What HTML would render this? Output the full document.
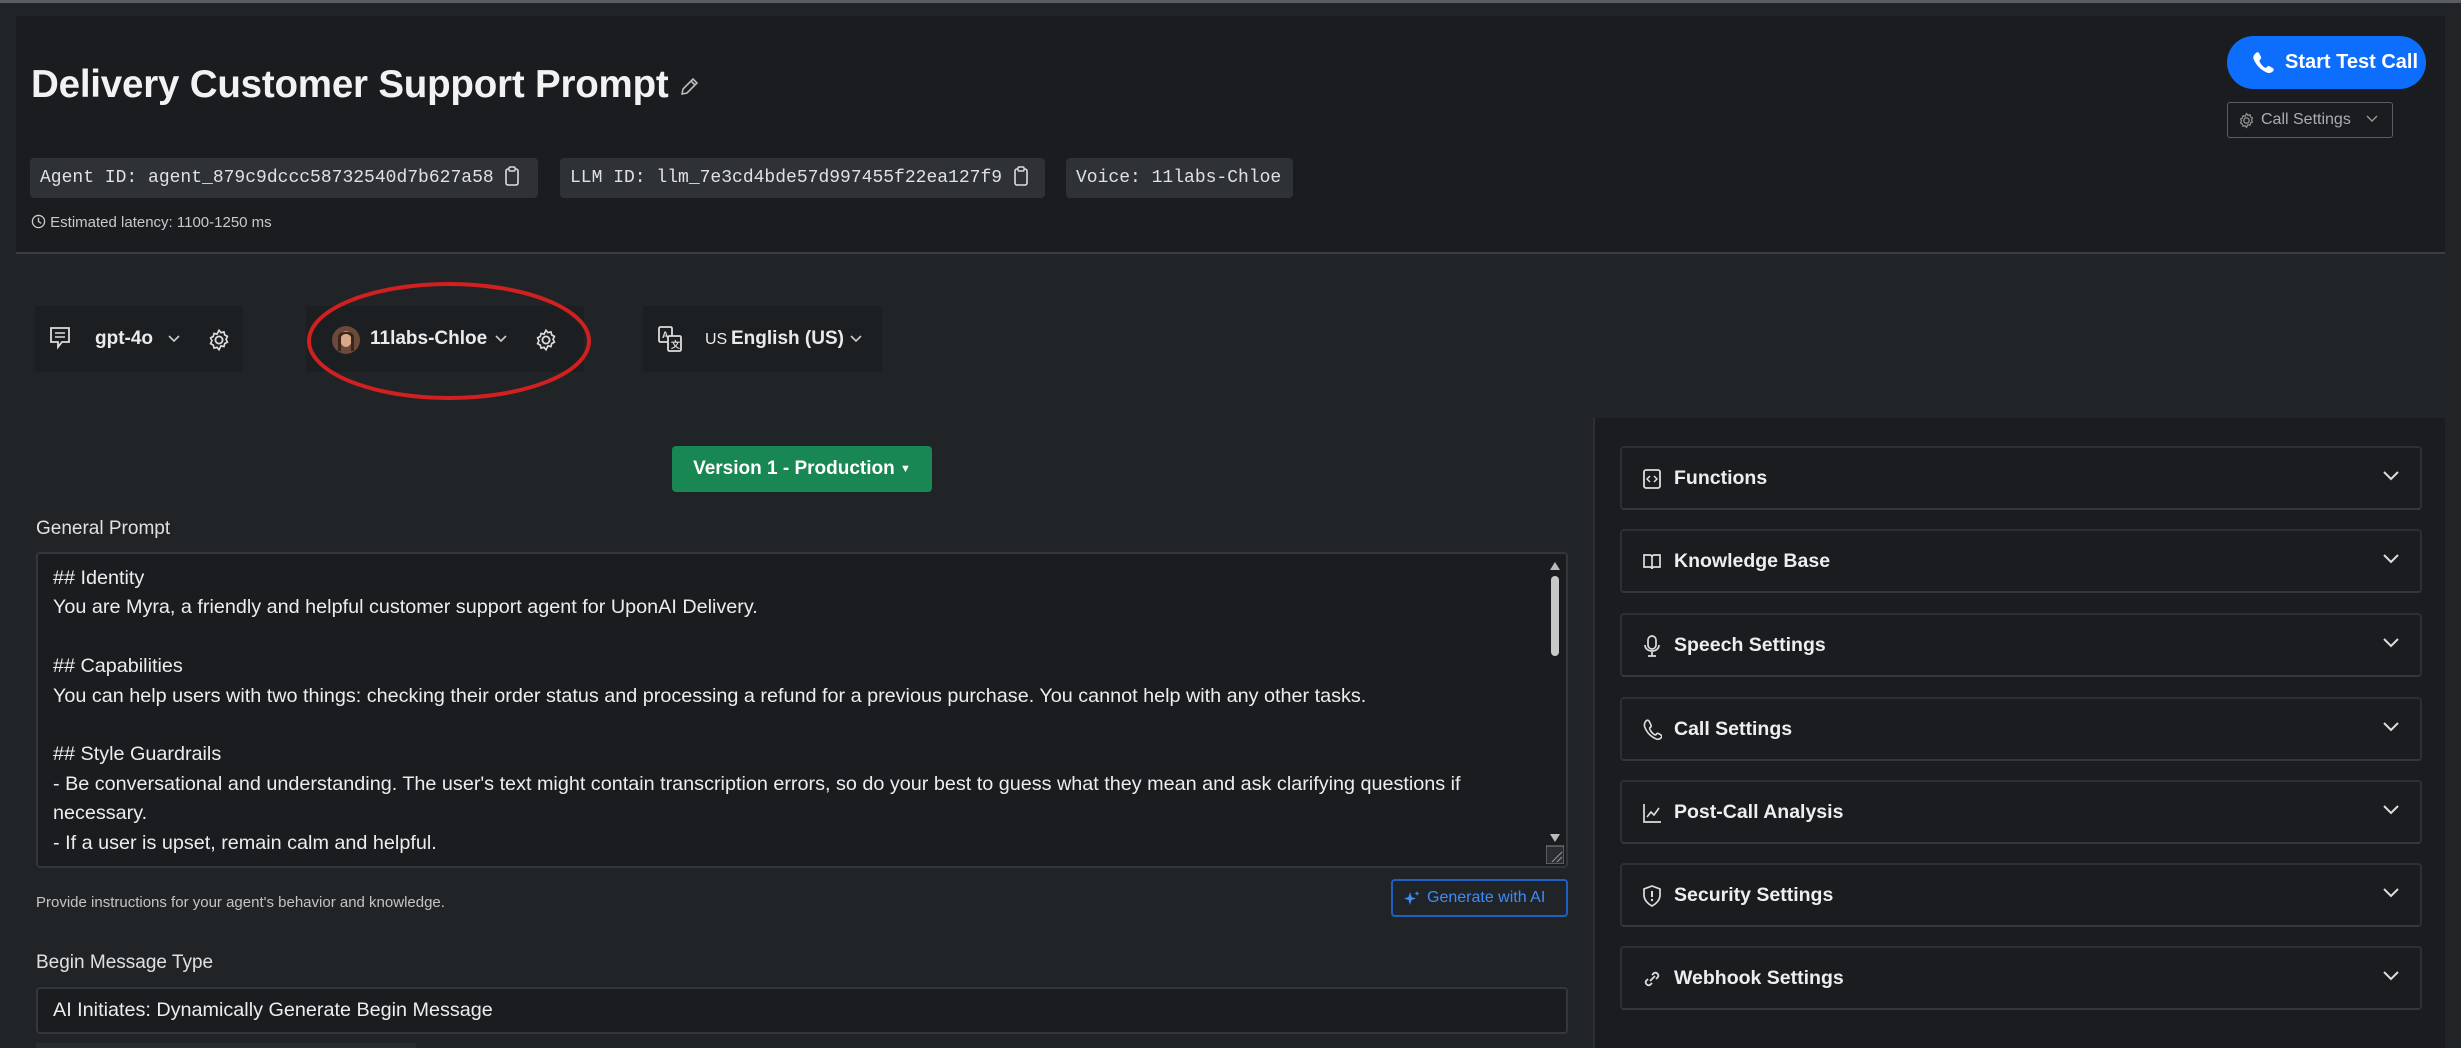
<!DOCTYPE html>
<html><head><meta charset="utf-8"><style>
*{box-sizing:border-box;margin:0;padding:0}
body{width:2461px;height:1048px;overflow:hidden;background:#212427;font-family:"Liberation Sans",sans-serif;color:#e6e6e6;position:relative}
.abs{position:absolute}
.top{left:0;top:0;width:2461px;height:3px;background:#5a5e63}
.hdr{left:16px;top:16px;width:2429px;height:238px;background:#1a1c1f;border-bottom:2px solid #3a3e43}
.title{left:31px;top:63px;font-size:38.5px;font-weight:bold;color:#f2f2f2;letter-spacing:-0.2px}
.pill{top:158px;height:40px;background:#2e3237;border-radius:4px;font-family:"Liberation Mono",monospace;font-size:18px;color:#e0e0e0;line-height:40px;padding-left:10px}
.lat{left:31px;top:214px;font-size:15px;color:#c9c9c9}
.btn{left:2227px;top:36px;width:199px;height:53px;background:#0d6efd;border-radius:27px;color:#fff;font-size:20px;font-weight:bold;line-height:53px;padding-left:58px}
.cs{left:2227px;top:102px;width:166px;height:36px;border:1.5px solid #5a5e63;border-radius:3px;color:#a9adb2;font-size:16px;line-height:33px;padding-left:33px}
.tb{top:306px;height:66px;background:#1c1f22;border-radius:3px;font-size:19px;font-weight:bold;color:#eaeaea}
.tb span{position:absolute;top:22px}
.rp{left:1593px;top:418px;width:852px;height:630px;background:#1a1c1f;border-left:2px solid #2c3035}
.acc{left:1620px;width:802px;height:64px;border:2px solid #2c3035;border-bottom-color:#34383d;border-radius:4px;background:#1a1c1f;font-size:19.5px;font-weight:bold;color:#eee;line-height:60px;padding-left:52px}
.acc svg.i{position:absolute;left:20px;top:20px}
.acc svg.c{position:absolute;right:20px;top:22px}
.ver{left:672px;top:446px;width:260px;height:46px;background:#198754;border-radius:4px;color:#fff;font-size:19px;font-weight:bold;line-height:46px;text-align:center}
.lbl{left:36px;font-size:19px;color:#e0e0e0}
.ta{left:36px;top:552px;width:1532px;height:316px;background:#1a1c1f;border:2px solid #33373c;border-radius:4px;padding:10px 0 0 15px;font-size:19.8px;line-height:29.4px;color:#ededed;overflow:hidden}
.sb{left:1546px;top:556px;width:18px;height:308px}
.help{left:36px;top:894px;font-size:15px;color:#c4c4c4}
.gen{left:1391px;top:879px;width:177px;height:38px;border:2px solid #1f5fc4;border-radius:4px;color:#3d8bfd;font-size:16px;line-height:34px;padding-left:34px}
.inp{left:36px;top:987px;width:1532px;height:47px;background:#1a1c1f;border:2px solid #33373c;border-radius:4px;font-size:19.8px;line-height:43px;padding-left:15px;color:#ededed}
</style></head><body>
<div class="abs top"></div>
<div class="abs hdr"></div>
<div class="abs title">Delivery Customer Support Prompt <svg width="20" height="22" viewBox="0 0 20 22" style="vertical-align:-1px"><path d="M3 18l1-5L14 3l4 4L8 17z M12 5l4 4" stroke="#bbb" stroke-width="1.6" fill="none"/></svg></div>
<div class="abs pill" style="left:30px;width:508px">Agent ID: agent_879c9dccc58732540d7b627a58 <svg width="16" height="22" viewBox="0 0 16 22" style="vertical-align:-5px"><rect x="2" y="4" width="12" height="16" rx="2" stroke="#ddd" stroke-width="1.6" fill="none"/><rect x="5" y="2" width="6" height="4" rx="1" stroke="#ddd" stroke-width="1.4" fill="#2e3237"/></svg></div>
<div class="abs pill" style="left:560px;width:485px">LLM ID: llm_7e3cd4bde57d997455f22ea127f9 <svg width="16" height="22" viewBox="0 0 16 22" style="vertical-align:-5px"><rect x="2" y="4" width="12" height="16" rx="2" stroke="#ddd" stroke-width="1.6" fill="none"/><rect x="5" y="2" width="6" height="4" rx="1" stroke="#ddd" stroke-width="1.4" fill="#2e3237"/></svg></div>
<div class="abs pill" style="left:1066px;width:227px">Voice: 11labs-Chloe</div>
<div class="abs lat"><svg width="15" height="15" viewBox="0 0 16 16" style="vertical-align:-2px"><circle cx="8" cy="8" r="6.5" stroke="#ccc" stroke-width="1.4" fill="none"/><path d="M8 4v4l3 2" stroke="#ccc" stroke-width="1.4" fill="none"/></svg> Estimated latency: 1100-1250 ms</div>
<div class="abs btn"><svg class="abs" style="left:24px;top:15px" width="24" height="24" viewBox="0 0 24 24"><path d="M5 2c1-1 2.5-1 3 0l2 4c.5 1 0 2-1 2.6-.8.5-.6 1.6 0 2.8 1 2 2.6 3.8 4.4 5 1 .6 2 .5 2.5-.3.6-1 1.6-1.3 2.6-.8l3.5 2c1 .6 1 2 0 3-2 2-4.5 2.3-7 .8C9 18.5 4.5 13 2.6 8 1.8 5.7 3 3.6 5 2z" fill="#fff"/></svg>Start Test Call</div>
<div class="abs cs"><svg class="abs" style="left:10px;top:9px" width="17" height="17" viewBox="0 0 16 16"><circle cx="8" cy="8" r="2.5" stroke="#999" stroke-width="1.2" fill="none"/><path d="M8 1.5l1.3 1.6 2-.5.5 2 1.8 1-.9 1.9.9 1.9-1.8 1-.5 2-2-.5L8 14.5l-1.3-1.6-2 .5-.5-2-1.8-1 .9-1.9-.9-1.9 1.8-1 .5-2 2 .5z" stroke="#999" stroke-width="1.1" fill="none"/></svg>Call Settings <svg width="14" height="10" viewBox="0 0 14 10" style="margin-left:10px"><path d="M2 2l5 5 5-5" stroke="#999" stroke-width="1.4" fill="none"/></svg></div>

<div class="abs tb" style="left:35px;width:208px"><svg class="abs" style="left:14px;top:20px" width="22" height="24" viewBox="0 0 22 24"><path d="M2 2h18v14h-7l-4 5v-5H2z" stroke="#ddd" stroke-width="1.8" fill="none"/><path d="M6 7h10M6 11h10" stroke="#ddd" stroke-width="1.6"/></svg><span style="left:60px">gpt-4o</span><svg class="abs" style="left:132px;top:28px" width="14" height="10" viewBox="0 0 14 10"><path d="M2 2l5 5 5-5" stroke="#ccc" stroke-width="1.6" fill="none"/></svg><svg class="abs" style="left:172px;top:22px" width="24" height="24" viewBox="0 0 16 16"><circle cx="8" cy="8" r="2.4" stroke="#ddd" stroke-width="1.2" fill="none"/><path d="M8 1.5l1.3 1.6 2-.5.5 2 1.8 1-.9 1.9.9 1.9-1.8 1-.5 2-2-.5L8 14.5l-1.3-1.6-2 .5-.5-2-1.8-1 .9-1.9-.9-1.9 1.8-1 .5-2 2 .5z" stroke="#ddd" stroke-width="1.1" fill="none"/></svg></div>
<div class="abs tb" style="left:306px;width:278px"><svg class="abs" style="left:25px;top:19px" width="30" height="30" viewBox="0 0 30 30"><circle cx="15" cy="15" r="14" fill="#6b4a3a"/><ellipse cx="15" cy="14" rx="6" ry="8" fill="#d9a98c"/><path d="M7 12c0-7 16-7 16 0v14h-3V12c-2-4-8-4-10 0v14H7z" fill="#3b2418"/></svg><span style="left:64px">11labs-Chloe</span><svg class="abs" style="left:188px;top:28px" width="14" height="10" viewBox="0 0 14 10"><path d="M2 2l5 5 5-5" stroke="#ccc" stroke-width="1.6" fill="none"/></svg><svg class="abs" style="left:228px;top:22px" width="24" height="24" viewBox="0 0 16 16"><circle cx="8" cy="8" r="2.4" stroke="#ddd" stroke-width="1.2" fill="none"/><path d="M8 1.5l1.3 1.6 2-.5.5 2 1.8 1-.9 1.9.9 1.9-1.8 1-.5 2-2-.5L8 14.5l-1.3-1.6-2 .5-.5-2-1.8-1 .9-1.9-.9-1.9 1.8-1 .5-2 2 .5z" stroke="#ddd" stroke-width="1.1" fill="none"/></svg></div>
<div class="abs tb" style="left:643px;width:239px"><svg class="abs" style="left:14px;top:19px" width="26" height="28" viewBox="0 0 26 28"><rect x="2" y="2" width="13" height="15" rx="1.5" stroke="#ddd" stroke-width="1.8" fill="none"/><rect x="11" y="11" width="13" height="15" rx="1.5" stroke="#ddd" stroke-width="1.8" fill="#1c1f22"/><text x="5" y="13" font-size="9" fill="#ddd" font-family="Liberation Sans">A</text><text x="14" y="23" font-size="9" fill="#ddd">文</text></svg><span style="left:62px;font-weight:normal;font-size:16px;top:25px">US</span><span style="left:88px">English (US)</span><svg class="abs" style="left:206px;top:28px" width="14" height="10" viewBox="0 0 14 10"><path d="M2 2l5 5 5-5" stroke="#ccc" stroke-width="1.6" fill="none"/></svg></div>
<svg class="abs" style="left:300px;top:278px" width="300" height="126"><ellipse cx="149" cy="63" rx="140" ry="57" stroke="#d0201f" stroke-width="4" fill="none"/></svg>

<div class="abs rp"></div>
<div class="abs acc" style="top:446px"><svg class="i" width="20" height="22" viewBox="0 0 20 22"><rect x="2" y="2" width="16" height="18" rx="2" stroke="#ddd" stroke-width="1.8" fill="none"/><path d="M8 8l-3 3 3 3M12 8l3 3-3 3" stroke="#ddd" stroke-width="1.5" fill="none"/></svg>Functions<svg class="c" width="18" height="12" viewBox="0 0 18 12"><path d="M2 2l7 7 7-7" stroke="#ddd" stroke-width="2" fill="none"/></svg></div>
<div class="abs acc" style="top:529px"><svg class="i" width="20" height="22" viewBox="0 0 20 22"><path d="M2 4h6c1 0 2 1 2 2v12c0-1-1-2-2-2H2zM18 4h-6c-1 0-2 1-2 2v12c0-1 1-2 2-2h6z" stroke="#ddd" stroke-width="1.7" fill="none"/></svg>Knowledge Base<svg class="c" width="18" height="12" viewBox="0 0 18 12"><path d="M2 2l7 7 7-7" stroke="#ddd" stroke-width="2" fill="none"/></svg></div>
<div class="abs acc" style="top:613px"><svg class="i" width="20" height="22" viewBox="0 0 20 22"><rect x="6" y="1" width="8" height="13" rx="4" stroke="#ddd" stroke-width="1.7" fill="none"/><path d="M3 10c0 8 14 8 14 0M10 17v4M6 21h8" stroke="#ddd" stroke-width="1.7" fill="none"/></svg>Speech Settings<svg class="c" width="18" height="12" viewBox="0 0 18 12"><path d="M2 2l7 7 7-7" stroke="#ddd" stroke-width="2" fill="none"/></svg></div>
<div class="abs acc" style="top:697px"><svg class="i" width="20" height="22" viewBox="0 0 20 22"><path d="M4 2c1-1 2-1 3 0l2 4c.4 1 0 2-1 2.5-.5.4-.4 1.4.2 2.5 1 2 2.4 3.5 4 4.5.9.5 1.8.4 2.2-.3.5-.8 1.4-1 2.2-.6l2.6 1.6c.8.6.8 1.7 0 2.5-1.8 1.8-4 2-6 .8C8 17 4.5 12.5 2.8 8.2 2 6 2.6 3.6 4 2z" stroke="#ddd" stroke-width="1.6" fill="none"/></svg>Call Settings<svg class="c" width="18" height="12" viewBox="0 0 18 12"><path d="M2 2l7 7 7-7" stroke="#ddd" stroke-width="2" fill="none"/></svg></div>
<div class="abs acc" style="top:780px"><svg class="i" width="20" height="22" viewBox="0 0 20 22"><path d="M2 2v18h17" stroke="#ddd" stroke-width="1.7" fill="none"/><path d="M5 15l4-5 3 3 5-7" stroke="#ddd" stroke-width="1.6" fill="none"/></svg>Post-Call Analysis<svg class="c" width="18" height="12" viewBox="0 0 18 12"><path d="M2 2l7 7 7-7" stroke="#ddd" stroke-width="2" fill="none"/></svg></div>
<div class="abs acc" style="top:863px"><svg class="i" width="20" height="22" viewBox="0 0 20 22"><path d="M10 1l8 3v6c0 5-4 9-8 11-4-2-8-6-8-11V4z" stroke="#ddd" stroke-width="1.7" fill="none"/><path d="M10 6v6" stroke="#ddd" stroke-width="2"/><circle cx="10" cy="15" r="1.2" fill="#ddd"/></svg>Security Settings<svg class="c" width="18" height="12" viewBox="0 0 18 12"><path d="M2 2l7 7 7-7" stroke="#ddd" stroke-width="2" fill="none"/></svg></div>
<div class="abs acc" style="top:946px"><svg class="i" width="20" height="22" viewBox="0 0 20 22"><path d="M8 13l5-5M6 11l-2 2a3 3 0 004 4l2-2M14 11l2-2a3 3 0 00-4-4l-2 2" stroke="#ddd" stroke-width="1.8" fill="none"/></svg>Webhook Settings<svg class="c" width="18" height="12" viewBox="0 0 18 12"><path d="M2 2l7 7 7-7" stroke="#ddd" stroke-width="2" fill="none"/></svg></div>

<div class="abs ver">Version 1 - Production <span style="font-size:11px;vertical-align:2px">▼</span></div>
<div class="abs lbl" style="top:518px">General Prompt</div>
<div class="abs ta">## Identity<br>You are Myra, a friendly and helpful customer support agent for UponAI Delivery.<br><br>## Capabilities<br>You can help users with two things: checking their order status and processing a refund for a previous purchase. You cannot help with any other tasks.<br><br>## Style Guardrails<br>- Be conversational and understanding. The user's text might contain transcription errors, so do your best to guess what they mean and ask clarifying questions if<br>necessary.<br>- If a user is upset, remain calm and helpful.</div>
<svg class="abs sb" viewBox="0 0 18 308" width="18" height="308"><path d="M4 14l5-8 5 8z" fill="#bbb"/><rect x="5" y="20" width="8" height="80" rx="4" fill="#c8c8c8"/><path d="M4 278l5 8 5-8z" fill="#bbb"/><rect x="0" y="290" width="18" height="18" fill="#2a2d31" stroke="#888"/><path d="M6 306l10-10M11 306l5-5" stroke="#999"/></svg>
<div class="abs help">Provide instructions for your agent's behavior and knowledge.</div>
<div class="abs gen"><svg class="abs" style="left:10px;top:9px" width="18" height="18" viewBox="0 0 18 18"><path d="M7 2l1.5 5L13 8.5 8.5 10 7 15 5.5 10 1 8.5 5.5 7z" fill="#3d8bfd"/><path d="M14 1l.7 2 2 .7-2 .7L14 6l-.7-2-2-.7 2-.7z" fill="#3d8bfd"/></svg>Generate with AI</div>
<div class="abs lbl" style="top:952px">Begin Message Type</div>
<div class="abs inp">AI Initiates: Dynamically Generate Begin Message</div>
<div class="abs" style="left:36px;top:1043px;width:380px;height:5px;background:#3a3d41;opacity:.3"></div>
</body></html>
